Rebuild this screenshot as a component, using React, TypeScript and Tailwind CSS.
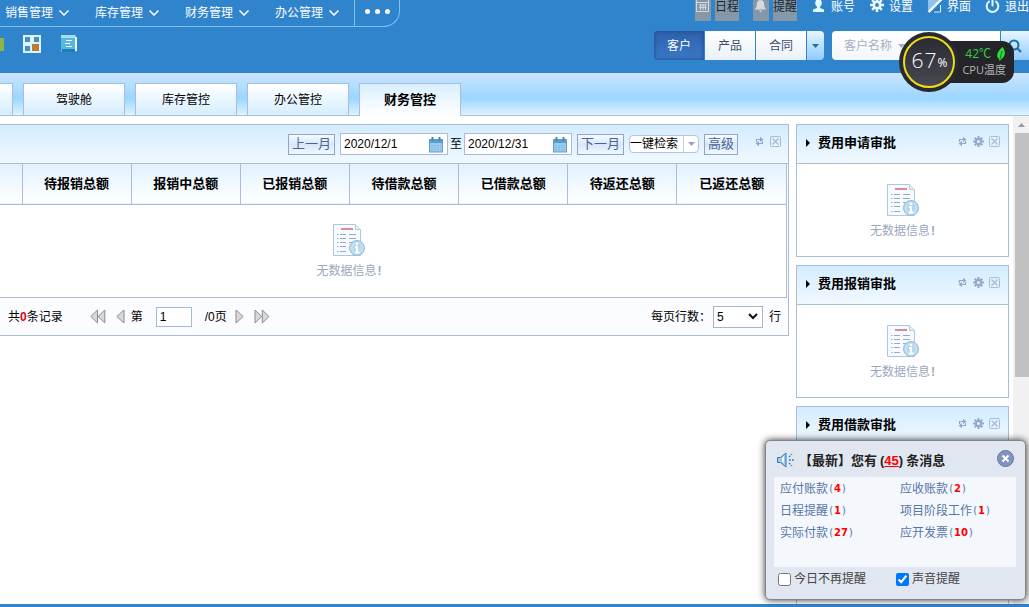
import React from "react";

const navItems = ["销售管理", "库存管理", "财务管理", "办公管理"];
const tabs = ["驾驶舱", "库存管控", "办公管控", "财务管控"];
const columns = ["待报销总额", "报销中总额", "已报销总额", "待借款总额", "已借款总额", "待返还总额", "已返还总额"];
const messages: [string, number][] = [
  ["应付账款", 4],
  ["应收账款", 2],
  ["日程提醒", 1],
  ["项目阶段工作", 1],
  ["实际付款", 27],
  ["应开发票", 10],
];

type ToolName = "calendar" | "bell" | "user" | "gear" | "skin" | "power";
const tools: { name: ToolName; label: string; dim?: boolean }[] = [
  { name: "calendar", label: "日程", dim: true },
  { name: "bell", label: "提醒", dim: true },
  { name: "user", label: "账号" },
  { name: "gear", label: "设置" },
  { name: "skin", label: "界面" },
  { name: "power", label: "退出" },
];

function GearShape({ size, color, hole }: { size: number; color: string; hole: string }) {
  return (
    <svg width={size} height={size} viewBox="0 0 16 16" aria-hidden="true">
      <g stroke={color} strokeWidth="3">
        <path d="M8 0v16M0 8h16M2.500 2.500l11 11M13.500 2.500l-11 11" />
      </g>
      <circle cx="8" cy="8" r="5" fill={color} />
      <circle cx="8" cy="8" r="2.200" fill={hole} />
    </svg>
  );
}

function ToolIcon({ name }: { name: ToolName }) {
  if (name === "gear") {
    return (
      <span className="-mt-[2px]">
        <GearShape size={14} color="#e8f8ff" hole="#3084cc" />
      </span>
    );
  }
  return (
    <svg width="15" height="14" viewBox="0 0 15 14" aria-hidden="true">
      {name === "calendar" && (
        <g fill="none" stroke="#d5d9dd">
          <path d="M1.500-.5h12v12h-12zM1.500 2.500h12M4 5h7.500M4 7.500h7.500M5.500 4v6M8 4v6M10.500 4v6" />
        </g>
      )}
      {name === "bell" && (
        <path fill="#d5d9dd" d="M7.500 0c-2.500 0-3.700 2-3.700 4.500 0 2.500-.8 3.500-2.300 5h12c-1.500-1.500-2.300-2.500-2.300-5C11.200 2 10 0 7.500 0zM6 10.500h3L7.500 12.500z" />
      )}
      {name === "user" && (
        <path fill="#e0fbff" d="M7.500-1C5.300-1 4.200.8 4.200 3c0 1.700.8 3 1.800 3.700v1.200L2 9.500v2.500h11V9.500L9 7.900V6.700c1-.7 1.800-2 1.800-3.700C10.800.8 9.700-1 7.500-1z" />
      )}
      {name === "skin" && (
        <g>
          <path fill="#8cc4ee" d="M1 0h10.500L1 10.500z" />
          <path fill="#2a78bd" d="M5.500 12.500L14 4v8.500z" />
          <path stroke="#d8f4ff" fill="none" d="M7 12h6.500V5" />
          <path stroke="#f4fdff" strokeWidth="2.500" d="M14.500-1L1.500 12" />
        </g>
      )}
      {name === "power" && (
        <g fill="none" stroke="#e0f6ff" strokeWidth="2" strokeLinecap="round">
          <path d="M4 1.500a5.800 5.800 0 1 0 7 0M7.500-1v6.500" />
        </g>
      )}
    </svg>
  );
}

function RefreshIcon() {
  return (
    <svg width="11" height="11" viewBox="0 0 11 11" fill="#93a9cc" stroke="#93a9cc" strokeWidth="1.200" aria-hidden="true">
      <path fill="none" d="M2.500 6V3.500h4M8.500 5v2.500h-4" />
      <path stroke="none" d="M6 .8l3.500 2.700L6 6zM5 5L1.500 7.600 5 10.300z" />
    </svg>
  );
}

function CloseIcon() {
  return (
    <svg width="11" height="11" viewBox="0 0 11 11" fill="none" stroke="#a9bad5" aria-hidden="true">
      <rect x=".5" y=".5" width="10" height="10" rx="1" />
      <path strokeWidth="1.300" d="M2.500 2.500l6 6M8.500 2.500l-6 6" />
    </svg>
  );
}

function CalendarIcon() {
  return (
    <svg width="14" height="17" viewBox="0 0 14 17" aria-hidden="true">
      <path fill="#5b9ccd" d="M0 3h14v13.500H0z" />
      <path fill="#9accec" d="M1 7h12v8.500H1z" />
      <path stroke="#7fb8e0" strokeWidth="1" strokeDasharray="2 1" d="M2 9.500h10M2 11.500h10M2 13.500h10" />
      <path stroke="#4886b8" strokeWidth="2" d="M3.500 1v4M10.500 1v4" />
    </svg>
  );
}

function NoData() {
  return (
    <div className="flex flex-col items-center gap-[5px]">
      <svg width="32" height="34" viewBox="0 0 32 34" aria-hidden="true">
        <path d="M.5.5h22l5 5v26H.5z" fill="#f7fbff" stroke="#a9c8e2" />
        <path d="M22.500.5v5h5" fill="#e6f2e6" stroke="#b5cfd8" />
        <path d="M8 5h12" stroke="#d98b98" strokeWidth="2" />
        <g stroke="#93acc8">
          <path d="M4 10.500h1.500M4 14.500h1.500M4 18.500h1.500M4 22.500h1.500M4 27.500h1.500" />
          <path d="M7 10.500h6M7 14.500h6M7 18.500h6M7 22.500h6M7 27.500h6M16 10.500h7M16 14.500h7M16 18.500h6" />
        </g>
        <circle cx="24" cy="24" r="7.500" fill="#b7d8ec" stroke="#93bddb" />
        <circle cx="24" cy="24" r="5.300" fill="none" stroke="#d6eaf6" />
        <path d="M24 19v2M22 23h2v5M22 28.500h4.500" stroke="#fff" strokeWidth="2" fill="none" />
      </svg>
      <p className="text-xs leading-4 text-[#9aa8be]">
        无数据信息<b className="pl-px">!</b>
      </p>
    </div>
  );
}

function SidePanel({ title, children, grow }: { title: string; children?: React.ReactNode; grow?: boolean }) {
  return (
    <section className={grow ? "flex-1 border border-b-0 border-[#a9bddb] bg-white" : "h-[133px] shrink-0 border border-[#a9bddb] bg-white"}>
      <header className="flex h-[39px] items-center border-b border-[#a9bddb] bg-linear-to-b from-[#d3ecff] to-[#f1f9ff] px-2 pb-[3px]">
        <svg width="5" height="8" viewBox="0 0 5 8" aria-hidden="true">
          <path d="M1 0l4 4-4 4z" fill="#000" />
        </svg>
        <h2 className="ml-2 flex-1 text-[13px] leading-4 font-bold">{title}</h2>
        <div className="flex items-center gap-[5px] pb-[2px]">
          <button className="block" aria-label="刷新"><RefreshIcon /></button>
          <button className="block" aria-label="设置"><GearShape size={11} color="#93a9cc" hole="#e3f2ff" /></button>
          <button className="block" aria-label="关闭"><CloseIcon /></button>
        </div>
      </header>
      {children && <div className="pt-5">{children}</div>}
    </section>
  );
}

function DateField({ label, value }: { label: string; value: string }) {
  return (
    <label className="flex h-[22px] w-[108px] items-center border border-[#a9bddb] bg-white pr-1 pl-[3px]">
      <input aria-label={label} defaultValue={value} className="w-0 flex-1 text-xs outline-none" />
      <CalendarIcon />
    </label>
  );
}

const smallButton = "h-[21px] border border-[#8fa5cc] bg-linear-to-b from-[#f6fbff] via-[#d9e7f8] to-[#f2f8ff] px-[3px] text-[13px] leading-4 text-[#4c6493]";

function Header() {
  return (
    <header className="h-[73px] shrink-0 overflow-hidden bg-[#3084cc] text-white">
      <div className="flex h-[27px] items-start justify-between">
        <nav className="flex h-[27px] rounded-br-[16px] border-r border-b border-[#7cc3f3]">
          {navItems.map((item) => (
            <a key={item} href="#" className="flex w-[90px] items-center gap-[6px] pb-px pl-[5px] text-xs">
              {item}
              <svg width="10" height="6" viewBox="0 0 10 6" fill="none" stroke="#fff" strokeWidth="1.500" aria-hidden="true">
                <path d="M.5.5L5 5 9.500.5" />
              </svg>
            </a>
          ))}
          <button aria-label="更多" className="-ml-[6px] flex w-[45px] items-center justify-center gap-[5px] border-l border-[#7cc3f3] pb-1">
            <i className="size-[5px] rounded-full bg-white" />
            <i className="size-[5px] rounded-full bg-white" />
            <i className="size-[5px] rounded-full bg-white" />
          </button>
        </nav>
        <div className="flex gap-[14px]">
          {tools.map((t) => (
            <button key={t.name} className="flex h-[21px] gap-1 text-xs leading-[14px]">
              <span className={t.dim ? "flex h-full w-4 justify-center bg-[#8598aa]" : "flex h-full w-4 justify-center"}>
                <ToolIcon name={t.name} />
              </span>
              <span className={t.dim ? "h-full bg-[#8598aa] text-[#1d2730]" : "h-full"}>{t.label}</span>
            </button>
          ))}
        </div>
      </div>
      <div className="flex items-start justify-between pt-1">
        <div className="flex h-[26px] items-center gap-[19px]">
          <i className="h-[13px] w-1 bg-[#8cb648]" />
          <svg width="18" height="18" viewBox="0 0 18 18" aria-hidden="true">
            <path fill="#d8f6ff" d="M0 0h18v18H0z" />
            <path fill="#4d8cb8" d="M2 2h5v5H2zM11 2h5v5h-5zM2 11h5v5H2z" />
            <path fill="#c07b35" d="M9 9h7v7H9z" />
          </svg>
          <svg width="18" height="18" viewBox="0 0 18 18" aria-hidden="true">
            <path fill="#58b7dd" d="M1 0h15v17H1z" />
            <path fill="#a3def3" d="M1 0h14v3H1z" />
            <path fill="#e3f8ff" d="M15 2h2v14h-2z" />
            <path fill="#1d7fb5" d="M2 14h13v3H2z" />
            <path stroke="#fff" d="M6 5.500h6M5 8.500h5M6 11.500h6" />
          </svg>
        </div>
        <div className="flex h-[29px] gap-2">
          <div className="flex gap-px overflow-hidden rounded text-xs">
            <button className="w-[50px] bg-linear-to-b from-[#2d62ab] to-[#3b78c6] shadow-[inset_0_0_4px_#1d4688]">客户</button>
            <button className="w-[50px] bg-linear-to-b from-white to-[#e9f1f8] text-[#3c4c70]">产品</button>
            <button className="w-[50px] bg-linear-to-b from-white to-[#e9f1f8] text-[#3c4c70]">合同</button>
            <button aria-label="更多类型" className="flex w-[17px] items-center justify-center bg-linear-to-b from-[#e8f6ff] to-[#8fcaff]">
              <svg width="7" height="4" viewBox="0 0 7 4"><path d="M0 0h7L3.500 4z" fill="#24719e" /></svg>
            </button>
          </div>
          <form className="flex gap-px overflow-hidden rounded-l" onSubmit={(e) => e.preventDefault()}>
            <div className="flex w-[168px] items-center bg-linear-to-b from-white to-[#f2f7fc] pl-3 text-[#a8aec4]">
              <select aria-label="搜索字段" className="w-[50px] appearance-none text-xs outline-none">
                <option>客户名称</option>
              </select>
              <svg width="7" height="4" viewBox="0 0 7 4" className="ml-1"><path d="M0 0h7L3.500 4z" fill="#a8aec4" /></svg>
              <input aria-label="搜索内容" className="w-0 flex-1 outline-none" />
            </div>
            <button aria-label="搜索" className="flex w-7 items-center justify-center bg-linear-to-b from-[#e8f6ff] to-[#8fcaff]">
              <svg width="14" height="14" viewBox="0 0 14 14" fill="none" stroke="#1e6ba8" strokeWidth="2">
                <circle cx="6" cy="6" r="4.500" />
                <path d="M9 9l4 4" />
              </svg>
            </button>
          </form>
        </div>
      </div>
    </header>
  );
}

function TabBar() {
  return (
    <nav className="flex h-[43px] shrink-0 items-end gap-[10px] border-b border-[#a9c3dd] bg-linear-to-b from-[#cbe5ff] via-[#9bd6ff] via-60% to-[#e0f3ff]">
      <i className="h-8 w-[13px] border-t border-r border-[#a9bddb] bg-linear-to-b from-white to-[#d5edfd]" />
      {tabs.map((t) => (
        <button
          key={t}
          className={
            t === "财务管控"
              ? "-mb-px h-[33px] w-[102px] border border-b-0 border-[#a9bddb] bg-linear-to-b from-[#d9efff] to-white text-[13px] font-bold"
              : "h-8 w-[102px] border border-b-0 border-[#a9bddb] bg-linear-to-b from-white to-[#d5edfd] text-xs"
          }
        >
          {t}
        </button>
      ))}
    </nav>
  );
}

function Arrow({ double, flip, label }: { double?: boolean; flip?: boolean; label: string }) {
  return (
    <button aria-label={label}>
      <svg width={double ? 16 : 9} height="15" viewBox={double ? "0 0 16 15" : "0 0 9 15"} fill="#d8d8d8" stroke="#8d8d8d">
        {flip ? (
          <path d={double ? "M7.500 1v13L.8 7.500zM14.800 1v13L8 7.500z" : "M8 1v13L.8 7.500z"} />
        ) : (
          <path d={double ? "M1 1v13l6.800-6.500zM8.300 1v13L15 7.500z" : "M1 1v13l7.200-6.500z"} />
        )}
      </svg>
    </button>
  );
}

function ExpensePanel() {
  return (
    <section className="min-w-0 flex-1 self-start border border-l-0 border-[#a9bddb] bg-[#fbfcff]">
      <div className="flex h-[39px] items-center justify-end border-b border-[#a9bddb] bg-linear-to-b from-[#d3ecff] to-[#f1f9ff] pr-[7px]">
        <button className={smallButton + " mr-[5px] w-[47px]"}>上一月</button>
        <DateField label="开始日期" value="2020/12/1" />
        <span className="mx-[2px] text-xs">至</span>
        <DateField label="结束日期" value="2020/12/31" />
        <button className={smallButton + " mr-[5px] ml-[5px] w-[47px]"}>下一月</button>
        <div className="mr-[5px] flex h-[18px] w-[70px] items-center overflow-hidden rounded-sm border border-[#b5c3dd] bg-white">
          <select aria-label="检索方式" className="h-4 w-[53px] appearance-none text-xs outline-none">
            <option>一键检索</option>
          </select>
          <span className="flex h-4 flex-1 items-center justify-center border-l border-[#c5d0e4]">
            <svg width="7" height="4" viewBox="0 0 7 4" aria-hidden="true"><path d="M0 0h7L3.500 4z" fill="#8fa5cc" /></svg>
          </span>
        </div>
        <button className={smallButton + " w-[34px]"}>高级</button>
        <div className="ml-4 flex gap-[5px] pb-[5px]">
          <button className="block" aria-label="刷新"><RefreshIcon /></button>
          <button className="block" aria-label="关闭"><CloseIcon /></button>
        </div>
      </div>
      <div className="mr-px border-r border-b border-[#a9bddb] bg-white">
        <table className="w-full table-fixed border-collapse">
          <thead>
            <tr className="h-10 border-b border-[#a9bddb] bg-linear-to-b from-[#e2f1ff] to-white">
              <th aria-label="序号" className="w-[22px]" />
              {columns.map((c) => (
                <th key={c} className="border-l border-[#a9bddb] text-[13px] leading-4 font-bold">{c}</th>
              ))}
            </tr>
          </thead>
          <tbody>
            <tr>
              <td colSpan={8} className="h-[93px] pt-px pr-[88px]">
                <NoData />
              </td>
            </tr>
          </tbody>
        </table>
      </div>
      <div className="flex h-[37px] items-center justify-between pr-[7px] pl-2 text-xs">
        <div className="flex items-center">
          <span>共<b className="text-[#e60012]">0</b>条记录</span>
          <div className="ml-[27px] flex items-center gap-[10px]">
            <Arrow double flip label="首页" />
            <Arrow flip label="上一页" />
          </div>
          <label className="ml-[6px] flex items-center gap-[13px]">
            第
            <input defaultValue="1" className="h-[20px] w-9 border border-[#9fbbdc] bg-white px-[3px] outline-none" />
          </label>
          <span className="ml-[13px]">/0页</span>
          <div className="ml-[8px] flex items-center gap-[10px]">
            <Arrow label="下一页" />
            <Arrow double label="末页" />
          </div>
        </div>
        <label className="flex items-center gap-[6px]">
          <span className="-mr-1">每页行数：</span>
          <span className="flex h-[22px] w-[50px] items-center border border-[#a8b5cc] bg-white pr-1">
            <select className="h-full w-0 flex-1 appearance-none pl-[3px] outline-none">
              <option>5</option>
            </select>
            <svg width="10" height="7" viewBox="0 0 10 7" fill="none" stroke="#111" strokeWidth="2" aria-hidden="true"><path d="M1 1l4 4 4-4" /></svg>
          </span>
          <span>行</span>
        </label>
      </div>
    </section>
  );
}

function MessageBox() {
  return (
    <aside className="absolute right-[3px] bottom-[7px] w-[261px] rounded-[5px] border border-[#85868b] bg-[#e1e7f0] pr-[7px] pb-3 pl-2 text-xs shadow-[0_0_7px_#333]">
      <header className="flex h-9 items-center pt-[2px] pl-[3px]">
        <svg width="17" height="16" viewBox="0 0 17 16" aria-hidden="true">
          <path fill="#9ccbed" stroke="#3977ae" d="M.5 5.500h3L9 1v14l-5.500-4.500h-3z" />
          <path fill="#fff" d="M5 6l2-2v7L5 9z" />
          <path stroke="#3f82bd" strokeWidth="1.300" strokeDasharray="2 1" d="M12 5l3-3M12 8h5M12 11l3 3" />
        </svg>
        <h2 className="ml-[5px] flex-1 pt-[2px] text-[13px] font-bold whitespace-nowrap text-[#222]">
          【最新】您有<span className="px-[3px]">(<a href="#" className="text-[#f00] underline">45</a>)</span>条消息
        </h2>
        <button aria-label="关闭消息" className="mr-1 mb-1 flex size-[17px] items-center justify-center rounded-full border border-[#63779f] bg-[#8295ba]">
          <svg width="9" height="9" viewBox="0 0 9 9" stroke="#fff" strokeWidth="2"><path d="M1.500 1.500l6 6M7.500 1.500l-6 6" /></svg>
        </button>
      </header>
      <ul className="mr-[2px] grid h-[90px] grid-cols-[120px_1fr] content-start bg-[#f4f8fd] pt-px pl-[6px]">
        {messages.map(([name, count]) => (
          <li key={name} className="flex h-[22px] items-center whitespace-nowrap">
            <a href="#" className="flex items-center text-[#5576a8]">
              {name}
              <span className="font-['DejaVu_Sans_Mono',monospace] text-[10px]">
                (<b className="font-['DejaVu_Sans',sans-serif] text-[#f00]">{count}</b>)
              </span>
            </a>
          </li>
        ))}
      </ul>
      <div className="mt-1 flex pl-1 text-[#444]">
        <label className="flex w-[118px] items-center gap-[3px] leading-4">
          <input type="checkbox" className="size-[13px]" />
          今日不再提醒
        </label>
        <label className="flex items-center gap-[3px] leading-4">
          <input type="checkbox" defaultChecked className="size-[13px]" />
          声音提醒
        </label>
      </div>
    </aside>
  );
}

function CpuWidget() {
  return (
    <div className="absolute top-8 right-[15px] flex items-center">
      <div className="z-10 flex size-[60px] items-center justify-center rounded-full bg-[#29292f]">
        <div className="flex size-[52px] items-center justify-center rounded-full border-2 border-[#ecde16] bg-linear-to-b from-[#2b2b33] to-[#484852] pb-1 font-['Open_Sans','Noto_Sans',sans-serif] text-white">
          <span className="flex gap-px text-[21px] leading-6 font-light">
            <span>6</span>
            <span>7</span>
          </span>
          <span className="pt-[6px] pl-px text-xs">%</span>
        </div>
      </div>
      <div className="-ml-5 flex h-[42px] flex-col justify-center rounded-xl bg-[#252529] pr-2 pl-[23px] font-['Open_Sans','Noto_Sans_CJK_SC',sans-serif] text-[11px] leading-4">
        <div className="flex items-center justify-end gap-1 text-xs leading-4 text-[#39cd48]">
          42℃
          <svg width="11" height="14" viewBox="0 0 11 14" aria-hidden="true">
            <path fill="#28dd3a" d="M7.500 0c2.500 3 4 8-.5 11.500L4.500 14l-.5-2C0 9 3 4 7.500 0z" />
            <path stroke="#176b23" d="M7 4L5 12" />
          </svg>
        </div>
        <span className="text-[#b5b5b5]">CPU温度</span>
      </div>
    </div>
  );
}

export default function App() {
  return (
    <div className="relative flex h-screen flex-col overflow-hidden bg-white font-['Liberation_Sans','Noto_Sans_CJK_SC',sans-serif] text-xs text-black">
      <Header />
      <TabBar />
      <main className="flex min-h-0 flex-1">
        <div className="flex min-w-0 flex-1 gap-[7px] pt-2">
          <ExpensePanel />
          <aside className="flex w-[213px] flex-col gap-2 overflow-hidden">
            <SidePanel title="费用申请审批">
              <NoData />
            </SidePanel>
            <SidePanel title="费用报销审批">
              <NoData />
            </SidePanel>
            <SidePanel title="费用借款审批" grow />
          </aside>
        </div>
        <div aria-hidden="true" className="ml-1 flex w-4 flex-col items-end bg-[#f1f1f1]">
          <span className="flex h-[17px] w-full items-center justify-center">
            <svg width="7" height="4" viewBox="0 0 7 4"><path d="M0 4h7L3.500 0z" fill="#999" /></svg>
          </span>
          <i className="h-1/2 w-[14px] bg-[#c1c1c1]" />
        </div>
      </main>
      <footer className="h-[3px] shrink-0 bg-[#3084cc]" />
      <CpuWidget />
      <MessageBox />
    </div>
  );
}
